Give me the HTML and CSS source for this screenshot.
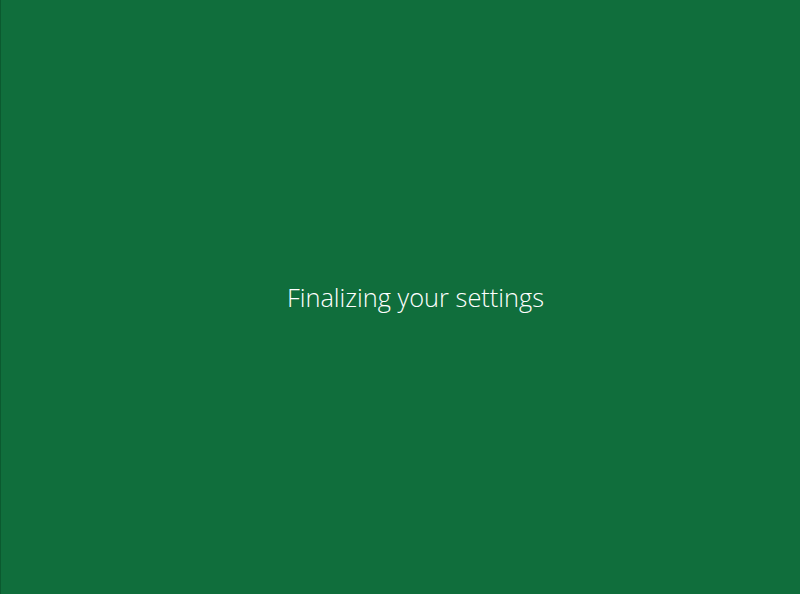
FILE: index.html
```html
<!DOCTYPE html>
<html>
<head>
<meta charset="utf-8">
<link rel="stylesheet" href="styles.css">
</head>
<body>
<main class="screen">
  <p class="status">Finalizing your settings</p>
</main>
</body>
</html>
```

FILE: styles.css
```css
html, body {
  margin: 0;
  padding: 0;
  height: 100%;
}
body {
  background: #106e3c;
}
.screen {
  box-sizing: border-box;
  height: 594px;
  width: 800px;
  border-left: 1px solid #0b5a2f;
  display: flex;
  justify-content: center;
  align-items: center;
  padding-left: 30px;
}
.status {
  margin: 0;
  margin-top: 1px;
  color: #ffffff;
  font-family: "Open Sans", "Segoe UI", sans-serif;
  font-weight: 300;
  font-size: 25.4px;
  line-height: 1.2;
}
```
